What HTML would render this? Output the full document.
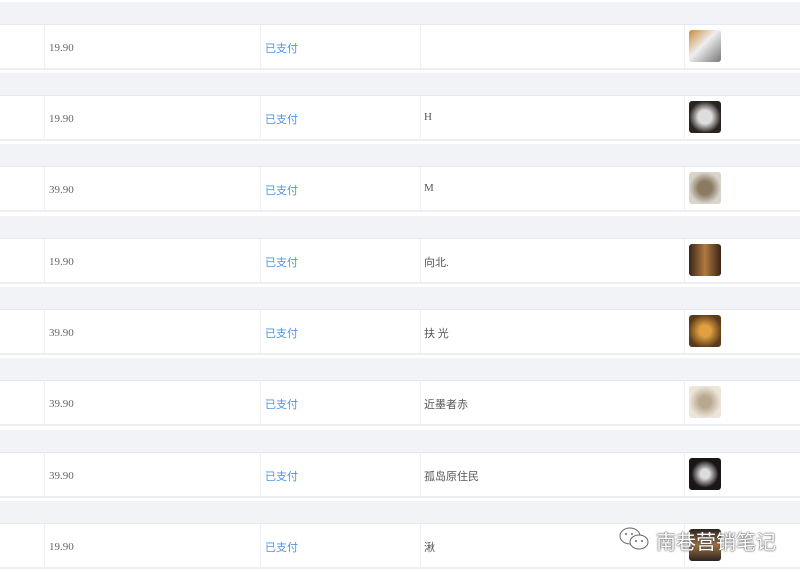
<!DOCTYPE html><html><head><meta charset="utf-8"><style>
body{margin:0;width:800px;height:574px;background:#fff;position:relative;overflow:hidden;font-family:"Liberation Serif","Noto Serif CJK SC",serif}
.g{position:absolute;left:0;width:800px;height:22px;background:#f2f3f6;border-bottom:1px solid #e6e9ef}
.r{position:absolute;left:0;width:800px;height:43px;border-bottom:2px solid #eceef3;background:#fff}
.v{position:absolute;top:0;bottom:0;width:1px;background:#edeff4}
.a{position:absolute;left:49px;top:17px;font-size:11px;color:#666}
.s{position:absolute;left:265px;top:15px;font-size:11px;color:#4d94e6;font-family:"Liberation Sans","Noto Sans CJK SC",sans-serif}
.n{position:absolute;left:424px;top:15px;font-size:11px;color:#555;font-family:"Liberation Serif","Noto Sans CJK SC",serif}
.i{position:absolute;left:689px;top:5px;width:32px;height:32px;border-radius:3px}
.w{position:absolute;left:656px;top:526px;font-size:20px;color:#fff;text-shadow:0 0 2px #555,0 0 1px #333;font-family:"Liberation Sans","Noto Sans CJK SC",sans-serif}
</style></head><body>
<div class="g" style="top:2px"></div>
<div class="r" style="top:25px"><div class="v" style="left:44px"></div><div class="v" style="left:260px"></div><div class="v" style="left:420px"></div><div class="v" style="left:684px"></div><span class="a">19.90</span><span class="s">已支付</span><span class="n"></span><div class="i" style="background:linear-gradient(135deg,#c98a3a,#eee 45%,#777)"></div></div>
<div class="g" style="top:73px"></div>
<div class="r" style="top:96px"><div class="v" style="left:44px"></div><div class="v" style="left:260px"></div><div class="v" style="left:420px"></div><div class="v" style="left:684px"></div><span class="a">19.90</span><span class="s">已支付</span><span class="n">H</span><div class="i" style="background:radial-gradient(circle,#ddd 30%,#2a2420 70%)"></div></div>
<div class="g" style="top:144px"></div>
<div class="r" style="top:167px"><div class="v" style="left:44px"></div><div class="v" style="left:260px"></div><div class="v" style="left:420px"></div><div class="v" style="left:684px"></div><span class="a">39.90</span><span class="s">已支付</span><span class="n">M</span><div class="i" style="background:radial-gradient(circle,#8a7a60 30%,#d8d4cc 70%)"></div></div>
<div class="g" style="top:216px"></div>
<div class="r" style="top:239px"><div class="v" style="left:44px"></div><div class="v" style="left:260px"></div><div class="v" style="left:420px"></div><div class="v" style="left:684px"></div><span class="a">19.90</span><span class="s">已支付</span><span class="n">向北.</span><div class="i" style="background:linear-gradient(90deg,#3a2418,#b07a40,#3a2418)"></div></div>
<div class="g" style="top:287px"></div>
<div class="r" style="top:310px"><div class="v" style="left:44px"></div><div class="v" style="left:260px"></div><div class="v" style="left:420px"></div><div class="v" style="left:684px"></div><span class="a">39.90</span><span class="s">已支付</span><span class="n">扶 光</span><div class="i" style="background:radial-gradient(circle,#e0a040 25%,#5a3a1a 75%)"></div></div>
<div class="g" style="top:358px"></div>
<div class="r" style="top:381px"><div class="v" style="left:44px"></div><div class="v" style="left:260px"></div><div class="v" style="left:420px"></div><div class="v" style="left:684px"></div><span class="a">39.90</span><span class="s">已支付</span><span class="n">近墨者赤</span><div class="i" style="background:radial-gradient(circle,#b8a890 25%,#ece6da 70%)"></div></div>
<div class="g" style="top:430px"></div>
<div class="r" style="top:453px"><div class="v" style="left:44px"></div><div class="v" style="left:260px"></div><div class="v" style="left:420px"></div><div class="v" style="left:684px"></div><span class="a">39.90</span><span class="s">已支付</span><span class="n">孤岛原住民</span><div class="i" style="background:radial-gradient(circle,#ddd 20%,#1a1616 60%)"></div></div>
<div class="g" style="top:501px"></div>
<div class="r" style="top:524px"><div class="v" style="left:44px"></div><div class="v" style="left:260px"></div><div class="v" style="left:420px"></div><div class="v" style="left:684px"></div><span class="a">19.90</span><span class="s">已支付</span><span class="n">湫</span><div class="i" style="background:linear-gradient(180deg,#2a2420,#a07040,#2a2420)"></div></div>
<svg style="position:absolute;left:618px;top:527px" width="34" height="24" viewBox="0 0 34 24"><g fill="#fff" stroke="#666" stroke-width="1"><ellipse cx="12" cy="9" rx="10" ry="8"/><ellipse cx="21" cy="15" rx="9" ry="7"/></g><g fill="#666"><circle cx="8" cy="7" r="1"/><circle cx="14" cy="7" r="1"/><circle cx="18" cy="14" r="1"/><circle cx="24" cy="14" r="1"/></g></svg>
<div class="w">南巷营销笔记</div>
</body></html>
